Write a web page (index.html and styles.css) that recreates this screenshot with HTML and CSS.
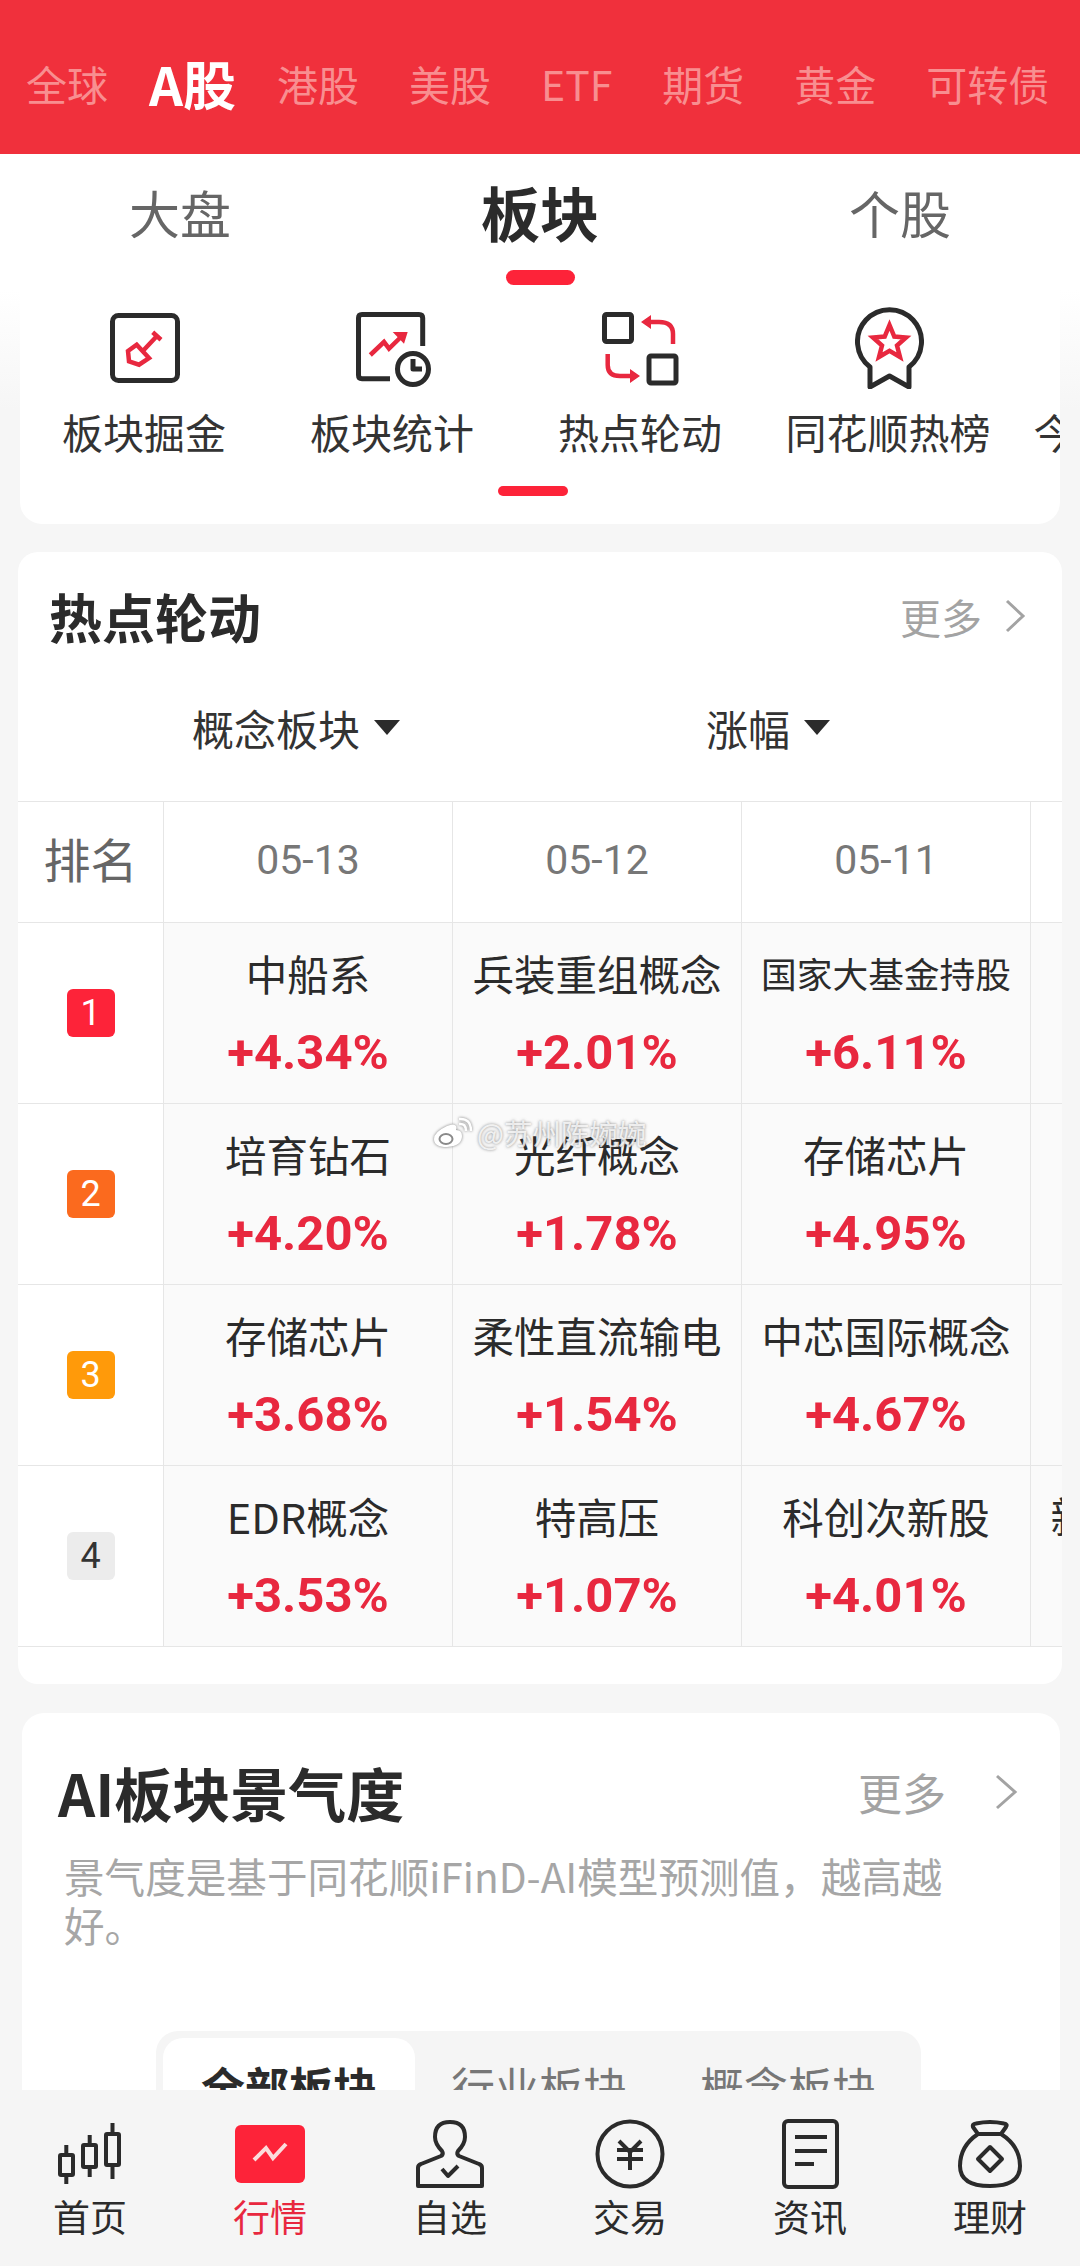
FILE: index.html
```html
<!DOCTYPE html>
<html lang="zh-CN">
<head>
    <meta charset="UTF-8">
    <meta name="viewport" content="width=device-width, initial-scale=1.0">
    <title>行情</title>
    <link rel="stylesheet" href="styles.css">
</head>
<body>
    <div class="market-bar">
        <span>全球</span>
        <span class="active">A股</span>
        <span>港股</span>
        <span>美股</span>
        <span>ETF</span>
        <span>期货</span>
        <span>黄金</span>
        <span>可转债</span>
    </div>

    <main class="main">
        <div class="tabs">
            <div class="tab">大盘</div>
            <div class="tab active">板块</div>
            <div class="tab">个股</div>
        </div>

        <div class="page">
            <section class="tools">
                <div class="tool-row">
                    <div class="tool">
                        <svg class="tool-icon icon-shovel" width="70" height="70" viewBox="0 0 70 70">
                            <rect class="ink" x="2.5" y="2.5" width="65" height="65" rx="6"/>
                            <path class="red" d="M42.7 19.3L51 26.7M46.7 23.3L34 36.7M18 38L26.7 31.7L39 45L29 51.7L19 48.3Z"/>
                        </svg>
                        <div class="tool-name">板块掘金</div>
                    </div>
                    <div class="tool">
                        <svg class="tool-icon" width="75" height="75" viewBox="0 0 75 75">
                            <path class="ink" d="M66.7 34V6Q66.7 2.5 63 2.5H6Q2.5 2.5 2.5 6V63Q2.5 66.7 6 66.7H34"/>
                            <circle class="ink" cx="57" cy="57" r="15.5"/>
                            <path class="ink" d="M57 47V57H66"/>
                            <path class="red" d="M14.3 43L28 30L33 36.7L47 23"/>
                            <path class="red-fill" d="M36.7 20H51.7L48 31.7Z"/>
                        </svg>
                        <div class="tool-name">板块统计</div>
                    </div>
                    <div class="tool">
                        <svg class="tool-icon" width="78" height="75" viewBox="0 0 78 75">
                            <rect class="ink" x="2.5" y="2.5" width="27" height="27" rx="2"/>
                            <rect class="ink" x="47" y="44" width="27" height="27" rx="2"/>
                            <path class="red" d="M71 32V22Q71 10 57 10H46M5.7 42V53Q5.7 64 18 64H30"/>
                            <path class="red-fill" d="M39 10L49 3V17ZM38 64L28 57V71Z"/>
                        </svg>
                        <div class="tool-name">热点轮动</div>
                    </div>
                    <div class="tool">
                        <svg class="tool-icon icon-badge" width="69" height="82" viewBox="0 0 69 82">
                            <path class="ink" d="M15 60A32 32 0 1 1 54 60V80L34.5 69L15 80Z"/>
                            <path class="red" d="M34.5 18L39.3 29.5L51 30.5L42 38.5L45 50L34.5 43.8L24 50L27 38.5L18 30.5L29.7 29.5Z"/>
                        </svg>
                        <div class="tool-name">同花顺热榜</div>
                    </div>
                    <div class="tool">
                        <div class="tool-icon"></div>
                        <div class="tool-name">今日强势股</div>
                    </div>
                </div>
                <div class="tool-mark"></div>
            </section>

            <section class="hot">
                <div class="hot-head">
                    <h2 class="hot-title">热点轮动</h2>
                    <div class="more">
                        更多
                        <svg width="22" height="34" viewBox="0 0 22 34"><path d="M3 2L19 17L3 32"/></svg>
                    </div>
                </div>
                <div class="filters">
                    <div class="filter">概念板块<i class="caret"></i></div>
                    <div class="filter filter-rise">涨幅<i class="caret"></i></div>
                </div>
                <div class="rank-table">
                    <div class="th rank-th">排名</div>
                    <div class="th">05-13</div>
                    <div class="th">05-12</div>
                    <div class="th">05-11</div>
                    <div class="th"></div>

                    <div class="rank-cell"><span class="badge b1">1</span></div>
                    <div class="cell"><div class="name">中船系</div><div class="pct">+4.34%</div></div>
                    <div class="cell"><div class="name">兵装重组概念</div><div class="pct">+2.01%</div></div>
                    <div class="cell"><div class="name small">国家大基金持股</div><div class="pct">+6.11%</div></div>
                    <div class="cell"></div>

                    <div class="rank-cell"><span class="badge b2">2</span></div>
                    <div class="cell"><div class="name">培育钻石</div><div class="pct">+4.20%</div></div>
                    <div class="cell"><div class="name">光纤概念</div><div class="pct">+1.78%</div></div>
                    <div class="cell"><div class="name">存储芯片</div><div class="pct">+4.95%</div></div>
                    <div class="cell"></div>

                    <div class="rank-cell"><span class="badge b3">3</span></div>
                    <div class="cell"><div class="name">存储芯片</div><div class="pct">+3.68%</div></div>
                    <div class="cell"><div class="name">柔性直流输电</div><div class="pct">+1.54%</div></div>
                    <div class="cell"><div class="name">中芯国际概念</div><div class="pct">+4.67%</div></div>
                    <div class="cell"></div>

                    <div class="rank-cell"><span class="badge b4">4</span></div>
                    <div class="cell"><div class="name">EDR概念</div><div class="pct">+3.53%</div></div>
                    <div class="cell"><div class="name">特高压</div><div class="pct">+1.07%</div></div>
                    <div class="cell"><div class="name">科创次新股</div><div class="pct">+4.01%</div></div>
                    <div class="cell cell-top"><div class="name">新型储能概念</div></div>
                </div>
            </section>

            <section class="boom">
                <div class="boom-head">
                    <h2 class="boom-title">AI板块景气度</h2>
                    <div class="more more-wide">
                        更多
                        <svg width="24" height="36" viewBox="0 0 24 36"><path d="M3 2L21 18L3 34"/></svg>
                    </div>
                </div>
                <p class="boom-desc">景气度是基于同花顺iFinD-AI模型预测值&#65292;越高越好。</p>
                <div class="boom-tabs">
                    <div class="boom-tab active">全部板块</div>
                    <div class="boom-tab">行业板块</div>
                    <div class="boom-tab">概念板块</div>
                </div>
            </section>
        </div>
    </main>

    <nav class="nav">
        <div class="nav-item">
            <svg width="64" height="62" viewBox="0 0 64 62">
                <path class="ink thin" d="M8.3 22V32M8.3 52V61M31.7 12V22M31.7 44V54M54.5 0V11M54.5 42V56"/>
                <rect class="ink thin" x="2" y="32" width="13" height="20" rx="1"/>
                <rect class="ink thin" x="25" y="22" width="13" height="22" rx="1"/>
                <rect class="ink thin" x="48" y="11" width="13" height="31" rx="1"/>
            </svg>
            <span>首页</span>
        </div>
        <div class="nav-item active">
            <svg width="70" height="58" viewBox="0 0 70 58">
                <rect width="70" height="58" rx="6" fill="#fd2339"/>
                <path d="M19 35L31 23L38 33L51 19" fill="none" stroke="#fbdcdc" stroke-width="4"/>
            </svg>
            <span>行情</span>
        </div>
        <div class="nav-item">
            <svg width="70" height="68" viewBox="0 0 70 68">
                <path class="ink thin" d="M3 66V48Q3 45 6 44L26 36Q29 34 27 31Q20 24 20 17Q20 2 35 2Q50 2 50 17Q50 24 43 31Q41 34 44 36L64 44Q67 45 67 48V66Z"/>
                <path class="ink thin" d="M27 49L33 56L43 46"/>
            </svg>
            <span>自选</span>
        </div>
        <div class="nav-item">
            <svg width="70" height="70" viewBox="0 0 70 70">
                <circle class="ink thin" cx="35" cy="35" r="32.5"/>
                <path class="ink thin" d="M24 22L35 33L46 22M22 31H48M22 40H48M35 33V51"/>
            </svg>
            <span>交易</span>
        </div>
        <div class="nav-item">
            <svg width="57" height="70" viewBox="0 0 57 70">
                <rect class="ink thin" x="2" y="2" width="53" height="66" rx="4"/>
                <path class="ink thin" d="M13 18H45M13 32H45M13 45H32"/>
            </svg>
            <span>资讯</span>
        </div>
        <div class="nav-item">
            <svg width="64" height="68" viewBox="0 0 64 68">
                <path class="ink thin" d="M20 14L15 7Q14 4 18 3.5Q32 .5 46 3.5Q50 4 48 7L43 14Q62 26 62 46Q62 66 32 66Q2 66 2 46Q2 26 20 14Z"/>
                <path class="ink thin" d="M20 14H43M32 27L44 39L32 51L20 39Z"/>
            </svg>
            <span>理财</span>
        </div>
    </nav>

    <div class="watermark">
        <svg width="40" height="32" viewBox="0 0 40 32">
            <path class="wb-body" d="M15 9Q22 6 24 9Q25 11 24 13Q30 13 30 19Q30 29 15 30Q2 30 2 22Q2 15 15 9Z"/>
            <ellipse class="wb-eye" cx="14" cy="22" rx="6.5" ry="5"/>
            <path class="wb-wave" d="M27 7Q34 6 34 14M27 2Q39 1 39 14"/>
        </svg>
        <span>@苏州陈婉婉</span>
    </div>
</body>
</html>
```

FILE: styles.css
```css
* {
    box-sizing: border-box;
}
html, body {
    margin: 0;
    height: 2266px;
}
body {
    position: relative;
    display: flex;
    flex-direction: column;
    overflow: hidden;
    background: #f5f5f5;
    color: #2b2b2b;
    font-family: "Noto Sans CJK SC", "Noto Sans", sans-serif;
}
h2, p {
    margin: 0;
}
svg {
    display: block;
}
.ink {
    fill: none;
    stroke: #2b2b2b;
    stroke-width: 5;
    stroke-linejoin: round;
}
.ink.thin {
    stroke-width: 4;
}
.red {
    fill: none;
    stroke: #e8283f;
    stroke-width: 4.5;
}
.red-fill {
    fill: #e8283f;
}

/* top red bar */
.market-bar {
    flex: none;
    height: 154px;
    padding: 12px 0 0 26px;
    display: flex;
    align-items: center;
    gap: 50px;
    background: #f0303c;
    color: #f88e90;
    font-size: 41px;
    white-space: nowrap;
}
.market-bar .active {
    margin: 0 -9px;
    color: #fff;
    font-size: 53px;
    font-weight: 700;
}

.main {
    flex: 1;
    min-height: 0;
    overflow: hidden;
}

/* 大盘 板块 个股 */
.tabs {
    height: 136px;
    display: grid;
    grid-template-columns: repeat(3, 360px);
    background: #fff;
}
.tab {
    position: relative;
    padding-top: 23px;
    text-align: center;
    font-size: 51px;
    line-height: 70px;
    color: #666;
}
.tab.active {
    font-size: 59px;
    font-weight: 700;
    color: #2b2b2b;
}
.tab.active::after {
    content: "";
    position: absolute;
    left: 146px;
    top: 116px;
    width: 69px;
    height: 15px;
    border-radius: 8px;
    background: #fd2339;
}

.page {
    height: 1800px;
    background: linear-gradient(#fff, #f6f6f6 120px);
}

/* icon row */
.tools {
    height: 234px;
    margin: 0 20px;
    padding-top: 16px;
    overflow: hidden;
    background: #fff;
    border-radius: 0 0 22px 22px;
}
.tool-row {
    display: flex;
}
.tool {
    flex: none;
    width: 248px;
    display: grid;
    grid-template-rows: 96px 56px;
    row-gap: 1px;
    justify-items: center;
}
.tool-icon {
    margin: 6px 0 0 2px;
}
.icon-shovel {
    margin-top: 7px;
}
.icon-badge {
    margin-top: 1px;
}
.tool-name {
    font-size: 41px;
    line-height: 56px;
    white-space: nowrap;
    color: #333;
}
.tool-mark {
    width: 70px;
    height: 10px;
    margin: 27px 0 0 478px;
    border-radius: 5px;
    background: #fd2339;
}

/* 热点轮动 card */
.hot {
    margin: 28px 18px 0;
    padding-bottom: 37px;
    overflow: hidden;
    background: #fff;
    border-radius: 20px;
}
.hot-head {
    height: 134px;
    padding: 0 36px 6px 31px;
    display: flex;
    align-items: center;
    justify-content: space-between;
}
.hot-title {
    font-size: 53px;
    font-weight: 700;
}
.more {
    display: flex;
    align-items: center;
    gap: 22px;
    font-size: 41px;
    color: #a3a3a3;
}
.more svg path {
    fill: none;
    stroke: #a3a3a3;
    stroke-width: 3;
}
.more-wide {
    gap: 48px;
    font-size: 44px;
}
.filters {
    height: 115px;
    padding: 0 0 33px 174px;
    display: flex;
    align-items: center;
    font-size: 42px;
    color: #333;
}
.filter {
    display: flex;
    align-items: center;
    white-space: nowrap;
}
.filter-rise {
    margin-left: 306px;
}
.caret {
    width: 0;
    height: 0;
    margin-left: 14px;
    border: 13px solid transparent;
    border-top: 15px solid #2b2b2b;
    border-bottom: 0;
}

.rank-table {
    display: grid;
    grid-template-columns: 146px repeat(4, 289px);
    grid-template-rows: 121px repeat(4, 181px);
    border-top: 1px solid #e6e6e6;
}
.th,
.rank-cell,
.cell {
    border-right: 1px solid #e6e6e6;
    border-bottom: 1px solid #e6e6e6;
    display: flex;
    align-items: center;
    justify-content: center;
}
.th {
    padding-bottom: 5px;
    font-family: Roboto, sans-serif;
    font-size: 41px;
    color: #777;
}
.rank-th {
    padding-bottom: 9px;
    font-family: "Noto Sans CJK SC", sans-serif;
    font-size: 47px;
    color: #666;
}
.cell {
    flex-direction: column;
    background: #fafafa;
    padding-bottom: 1px;
}
.cell-top {
    justify-content: flex-start;
    padding-top: 15px;
}
.name {
    height: 68px;
    line-height: 68px;
    font-size: 41.5px;
    white-space: nowrap;
    color: #2b2b2b;
}
.name.small {
    font-size: 35.7px;
}
.pct {
    margin-top: 12px;
    font-family: Roboto, sans-serif;
    font-size: 49px;
    line-height: 68px;
    font-weight: 700;
    color: #e8283f;
}
.badge {
    width: 48px;
    height: 48px;
    border-radius: 6px;
    display: flex;
    align-items: center;
    justify-content: center;
    font-family: Roboto, sans-serif;
    font-size: 36px;
    color: #fff;
}
.b1 { background: #fd2339; }
.b2 { background: #fb6a1e; }
.b3 { background: #ff9a0a; }
.b4 { background: #ececec; color: #333; }

/* AI板块景气度 card */
.boom {
    margin: 29px 20px 0 22px;
    height: 500px;
    padding: 44px 42px 0 36px;
    background: #fff;
    border-radius: 22px;
}
.boom-head {
    height: 70px;
    display: flex;
    align-items: center;
    justify-content: space-between;
}
.boom-title {
    font-size: 58px;
    font-weight: 700;
}
.boom-desc {
    width: 900px;
    margin: 24px 0 0 6px;
    font-size: 40.6px;
    line-height: 49px;
    color: #a6a6a6;
}
.boom-tabs {
    width: 765px;
    height: 120px;
    margin: 82px 0 0 98px;
    padding: 7px 7px 0;
    display: grid;
    grid-template-columns: 252px 248px 250px;
    background: #f5f5f5;
    border-radius: 22px 22px 0 0;
}
.boom-tab {
    padding-top: 18px;
    text-align: center;
    font-size: 44px;
    line-height: 60px;
    color: #777;
}
.boom-tab.active {
    background: #fff;
    border-radius: 20px 20px 0 0;
    font-weight: 700;
    color: #2b2b2b;
}

/* bottom nav */
.nav {
    flex: none;
    height: 176px;
    display: grid;
    grid-template-columns: repeat(6, 1fr);
    background: #f5f5f5;
}
.nav-item {
    padding-top: 28px;
    display: flex;
    flex-direction: column;
    align-items: center;
    font-size: 37px;
    color: #2b2b2b;
}
.nav-item svg {
    height: 72px;
}
.nav-item span {
    line-height: 52px;
}
.nav-item.active {
    color: #e8283f;
}

/* weibo mark over the table */
.watermark {
    position: absolute;
    left: 432px;
    top: 1115px;
    display: flex;
    align-items: center;
    gap: 5px;
    font-size: 28.5px;
    line-height: 36px;
    color: rgba(255, 255, 255, 0.8);
    text-shadow: 0 0 3px rgba(90, 90, 90, 0.75);
}
.watermark svg {
    filter: drop-shadow(0 0 1.5px rgba(90, 90, 90, 0.8));
}
.wb-body {
    fill: #fff;
}
.wb-eye {
    fill: #fff;
    stroke: #8a8a8a;
    stroke-width: 2;
}
.wb-wave {
    fill: none;
    stroke: #fff;
    stroke-width: 2.5;
}
```
